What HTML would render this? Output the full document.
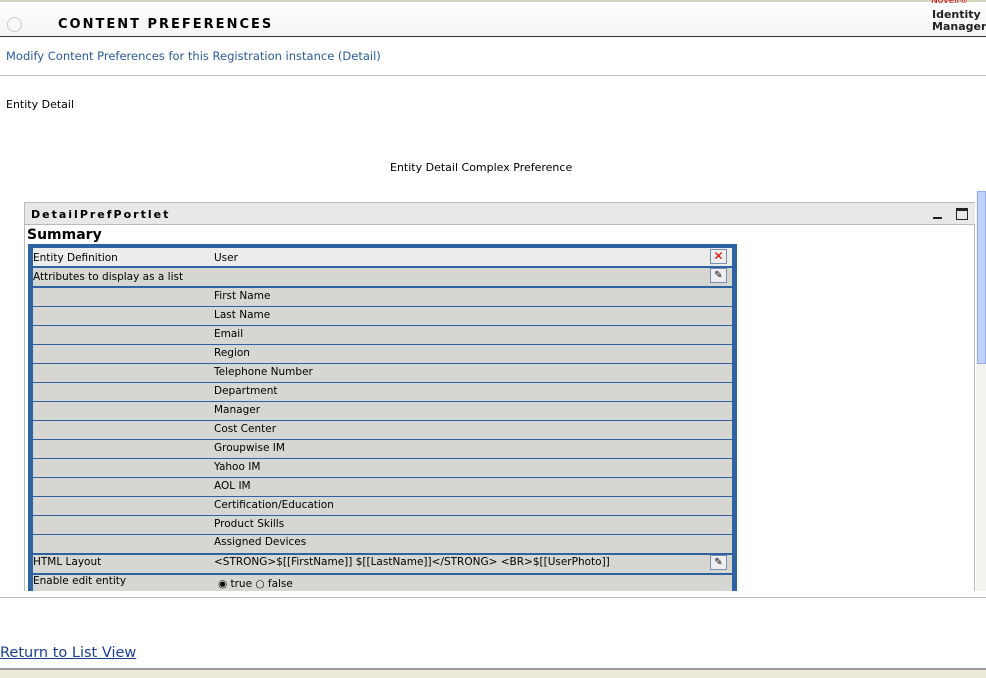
<!DOCTYPE html>
<html><head><style>
body{margin:0;width:986px;height:678px;overflow:hidden;background:#fff;font-family:"DejaVu Sans","Liberation Sans",sans-serif;position:relative}
.a{position:absolute}
.t{font-size:11px;color:#000}
.row{position:absolute;left:33px;width:699px;height:18px;background:#d6d6d2;border-bottom:1px solid #2e62a0;font-size:10.5px}
.row span{position:absolute;top:3px}
</style></head><body>
<div class="a" style="left:0;top:0;width:986px;height:2px;background:#d8d4c0"></div>
<div class="a" style="left:0;top:2px;width:986px;height:34px;background:linear-gradient(#fff,#f4f4f4)"></div>
<div class="a" style="left:7px;top:17px;width:13px;height:13px;border:1px solid #ccc;border-radius:50%"></div>
<div class="a" style="left:58px;top:17px;font-size:13px;font-weight:bold;letter-spacing:2px">CONTENT PREFERENCES</div>
<div class="a" style="left:931px;top:-4px;font-size:9px;color:#c00">Novell®</div>
<div class="a" style="left:932px;top:9px;font-size:11px;line-height:12px;color:#222;font-weight:bold">Identity<br>Manager</div>
<div class="a" style="left:0;top:36px;width:986px;height:1px;background:#333"></div>
<div class="a" style="left:6px;top:49px;font-size:11.5px;color:#2b5b9a">Modify Content Preferences for this Registration instance (Detail)</div>
<div class="a" style="left:0;top:75px;width:986px;height:1px;background:#bbb"></div>
<div class="a t" style="left:6px;top:98px">Entity Detail</div>
<div class="a t" style="left:390px;top:161px">Entity Detail Complex Preference</div>
<div class="a" style="left:976px;top:191px;width:10px;height:400px;background:#f4f3ee"></div>
<div class="a" style="left:977px;top:191px;width:9px;height:173px;background:#c1d3fb;border:1px solid #98aee0;box-sizing:border-box"></div>
<div class="a" style="left:24px;top:202px;width:951px;height:389px;border:1px solid #bbb;border-bottom:none;box-sizing:border-box"></div>
<div class="a" style="left:25px;top:203px;width:950px;height:21px;background:#e8e8e6;border-bottom:1px solid #bbb"></div>
<div class="a" style="left:31px;top:208px;font-size:11px;font-weight:bold;letter-spacing:2px">DetailPrefPortlet</div>
<div class="a" style="left:933px;top:217px;width:9px;height:2px;background:#222"></div>
<div class="a" style="left:956px;top:208px;width:10px;height:8px;border:1px solid #222;border-top-width:3px"></div>
<div class="a" style="left:27px;top:227px;font-size:14px;font-weight:bold">Summary</div>
<div class="a" style="left:28px;top:244px;width:709px;height:347px;background:#2e62a0"></div>
<div class="row" style="top:248px;background:#ececea;border-bottom:2px solid #2e62a0"><span style="left:0;top:4px">Entity Definition</span><span style="left:181px;top:4px">User</span></div>
<div class="a" style="left:710px;top:249px;width:15px;height:13px;border:1px solid #7a8fae;background:#eee;color:#d00;font-size:12px;line-height:13px;text-align:center;font-weight:bold">✕</div>
<div class="row" style="top:268px;border-bottom:2px solid #2e62a0"><span style="left:0;top:3px">Attributes to display as a list</span></div>
<div class="a" style="left:710px;top:268px;width:15px;height:13px;border:1px solid #7a8fae;background:#eee;font-size:10px;line-height:13px;text-align:center">✎</div>
<div class="row" style="top:288px"><span style="left:181px;top:2px">First Name</span></div>
<div class="row" style="top:307px"><span style="left:181px;top:2px">Last Name</span></div>
<div class="row" style="top:326px"><span style="left:181px;top:2px">Email</span></div>
<div class="row" style="top:345px"><span style="left:181px;top:2px">Region</span></div>
<div class="row" style="top:364px"><span style="left:181px;top:2px">Telephone Number</span></div>
<div class="row" style="top:383px"><span style="left:181px;top:2px">Department</span></div>
<div class="row" style="top:402px"><span style="left:181px;top:2px">Manager</span></div>
<div class="row" style="top:421px"><span style="left:181px;top:2px">Cost Center</span></div>
<div class="row" style="top:440px"><span style="left:181px;top:2px">Groupwise IM</span></div>
<div class="row" style="top:459px"><span style="left:181px;top:2px">Yahoo IM</span></div>
<div class="row" style="top:478px"><span style="left:181px;top:2px">AOL IM</span></div>
<div class="row" style="top:497px"><span style="left:181px;top:2px">Certification/Education</span></div>
<div class="row" style="top:516px"><span style="left:181px;top:2px">Product Skills</span></div>
<div class="row" style="top:535px;border-bottom:2px solid #2e62a0"><span style="left:181px;top:1px">Assigned Devices</span></div>
<div class="row" style="top:555px"><span style="left:0;top:1px">HTML Layout</span><span style="left:181px;top:1px">&lt;STRONG&gt;$[[FirstName]] $[[LastName]]&lt;/STRONG&gt; &lt;BR&gt;$[[UserPhoto]]</span></div>
<div class="a" style="left:710px;top:555px;width:15px;height:13px;border:1px solid #7a8fae;background:#eee;font-size:10px;line-height:13px;text-align:center">✎</div>
<div class="row" style="top:575px;height:16px;border:none"><span style="left:0;top:0">Enable edit entity</span><span style="left:185px;top:3px">◉ true ○ false</span></div>
<div class="a" style="left:0;top:591px;width:986px;height:6px;background:#fff"></div>
<div class="a" style="left:0;top:597px;width:986px;height:1px;background:#bbb"></div>
<div class="a" style="left:0;top:645px;font-size:14.5px;color:#1a3f8e;text-decoration:underline">Return to List View</div>
<div class="a" style="left:0;top:668px;width:986px;height:2px;background:#999"></div>
<div class="a" style="left:0;top:670px;width:986px;height:8px;background:#ece9d8"></div>
</body></html>
